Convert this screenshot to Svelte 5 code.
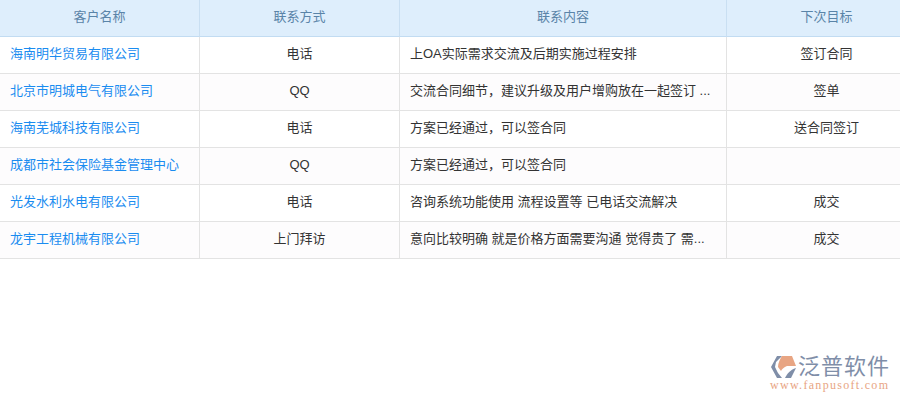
<script>
  const columns = ['客户名称', '联系方式', '联系内容', '下次目标'];
  const rows = [
    { name: '海南明华贸易有限公司', way: '电话', note: '上OA实际需求交流及后期实施过程安排', next: '签订合同' },
    { name: '北京市明城电气有限公司', way: 'QQ', note: '交流合同细节，建议升级及用户增购放在一起签订 ...', next: '签单' },
    { name: '海南芜城科技有限公司', way: '电话', note: '方案已经通过，可以签合同', next: '送合同签订' },
    { name: '成都市社会保险基金管理中心', way: 'QQ', note: '方案已经通过，可以签合同', next: '' },
    { name: '光发水利水电有限公司', way: '电话', note: '咨询系统功能使用 流程设置等 已电话交流解决', next: '成交' },
    { name: '龙宇工程机械有限公司', way: '上门拜访', note: '意向比较明确 就是价格方面需要沟通 觉得贵了 需...', next: '成交' }
  ];
</script>

<div class="page">
  <div class="grid">
    {#each columns as col}
      <div class="head">{col}</div>
    {/each}
    {#each rows as row}
      <div class="cell link">{row.name}</div>
      <div class="cell center">{row.way}</div>
      <div class="cell">{row.note}</div>
      <div class="cell center">{row.next}</div>
    {/each}
  </div>

  <div class="logo">
    <div class="logo-top">
      <svg width="28" height="24" viewBox="0 0 28 24">
        <path d="M7 1 L12 1 L6 7 L5 12 L8 18 L12 23 L7 23 L1 12 Z" fill="#7f8ea8" />
        <path d="M12 1 L22 1 L26 11 L17 11 C14 12 12 14 11 16 L8 12 C8 8 10 4 12 1 Z" fill="#e8a583" />
        <path d="M15 23 C17 19 20 15 26 13 L21 23 Z" fill="#7f8ea8" />
      </svg>
      <span class="logo-name">泛普软件</span>
    </div>
    <div class="logo-url">www.fanpusoft.com</div>
  </div>
</div>

<style>
  :global(body) {
    margin: 0;
    background: #fff;
  }

  .page {
    position: relative;
    width: 900px;
    height: 400px;
    overflow: hidden;
    font-family: "Liberation Sans", "Noto Sans CJK SC", sans-serif;
    font-size: 13px;
    color: #333;
  }

  .grid {
    display: grid;
    grid-template-columns: 200px 200px 327px 200px;
    grid-auto-rows: 37px;
  }

  .head {
    display: flex;
    align-items: center;
    justify-content: center;
    box-sizing: border-box;
    padding-bottom: 6px;
    background: #deeefc;
    color: #5a84a8;
    border-right: 1px solid #c9dff2;
    border-bottom: 1px solid #c2dcf2;
  }

  .cell {
    box-sizing: border-box;
    padding: 0 10px;
    line-height: 34px;
    background: #fff;
    border-right: 1px solid #e3e3e3;
    border-bottom: 1px solid #e3e3e3;
    white-space: nowrap;
    overflow: hidden;
  }

  .cell:nth-child(8n + 9),
  .cell:nth-child(8n + 10),
  .cell:nth-child(8n + 11),
  .cell:nth-child(8n + 12) {
    background: #fdfcfd;
  }

  .link {
    color: #1a8cf0;
  }

  .center {
    text-align: center;
  }

  .logo {
    position: absolute;
    left: 770px;
    top: 355px;
    width: 125px;
  }

  .logo-top {
    display: flex;
    align-items: center;
    white-space: nowrap;
  }

  .logo-name {
    font-size: 22px;
    line-height: 24px;
    color: #7f8ea8;
    letter-spacing: 1px;
  }

  .logo-url {
    font-family: "Liberation Serif", serif;
    font-size: 12px;
    line-height: 12px;
    letter-spacing: 1.3px;
    color: #e8a583;
    white-space: nowrap;
  }
</style>
